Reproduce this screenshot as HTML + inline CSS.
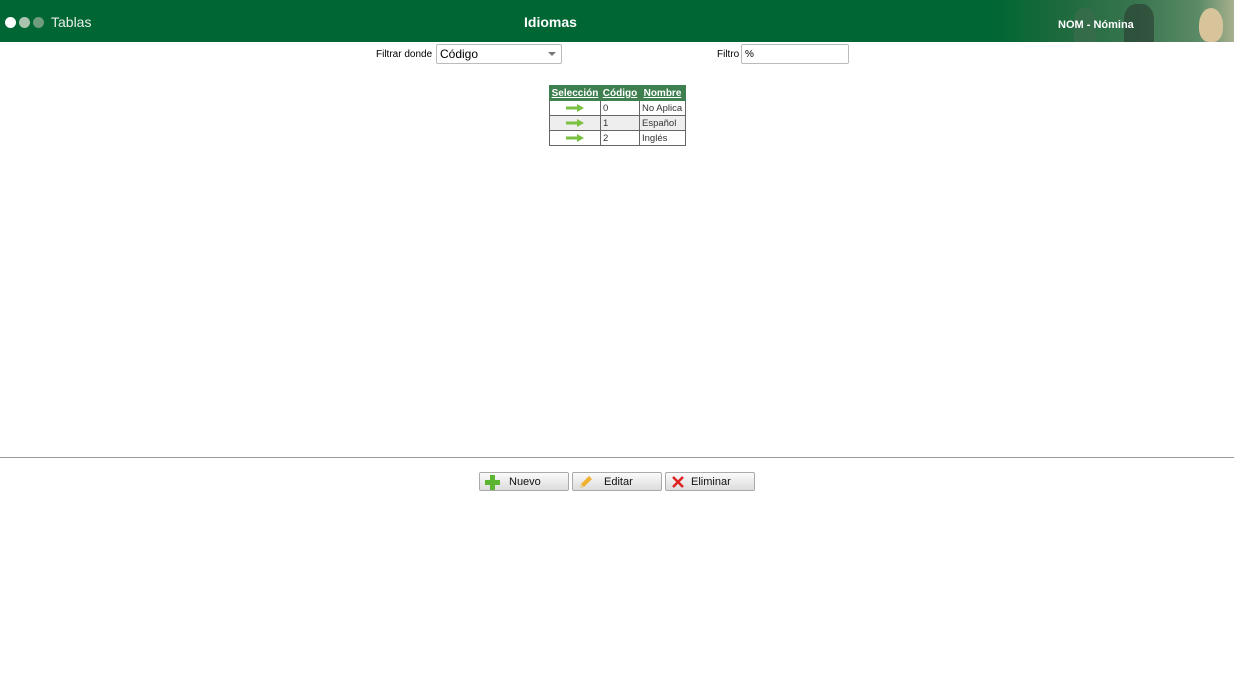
<!DOCTYPE html>
<html><head><meta charset="utf-8"><style>
*{margin:0;padding:0;box-sizing:border-box}
body{width:1234px;height:698px;background:#fff;font-family:"Liberation Sans",sans-serif;position:relative;overflow:hidden}
.hdr{position:absolute;left:0;top:0;width:1234px;height:42px;background:#006633}
.dot{position:absolute;top:17px;width:11px;height:11px;border-radius:50%}
.t{position:absolute;color:#fff}
.photo{position:absolute;right:0;top:0;width:240px;height:42px;background:linear-gradient(90deg,#006633 0%,#1f6a3e 30%,#3a7650 60%,#5b8a66 85%,#a8b08e 100%)}
.f{position:absolute;font-size:10px;color:#000}
.box{position:absolute;border:1px solid #bbb;border-radius:2px;background:#fff;font-size:12px;color:#000}
table{position:absolute;left:549px;top:85px;border-collapse:collapse;table-layout:fixed;width:136px;font-family:"Liberation Sans",sans-serif;font-size:9.5px;white-space:nowrap}
th{background:#3d7f4f;color:#fff;text-decoration:underline;font-weight:bold;height:15px;padding:0 1px;border:1px solid #3d7f4f;font-size:10px;overflow:hidden}
td{border:1px solid #666;height:15px;padding:0 2px;color:#333;overflow:hidden}
tr.alt td{background:#eee}
.arr{display:block;margin:0 auto;width:18px;height:8px}
.line{position:absolute;left:0;top:457px;width:1234px;height:1px;background:#999}
.btn{position:absolute;top:472px;width:90px;height:19px;border:1px solid #aaa;border-radius:2px;background:linear-gradient(#fbfbfb,#dcdcdc);font-family:"Liberation Sans",sans-serif;font-size:11px;color:#111}
.btn span{position:absolute;top:3px}
.btn svg{position:absolute;left:5px;top:2px}
</style></head><body>
<div class="hdr">
<div class="dot" style="left:5px;background:#fff"></div>
<div class="dot" style="left:19px;background:#aac4b0"></div>
<div class="dot" style="left:33px;background:#6e9c7c"></div>
<div class="t" style="left:51px;top:14px;font-size:14px;color:#e8f0ea">Tablas</div>
<div class="t" style="left:524px;top:14px;font-size:14px;font-weight:bold">Idiomas</div>
<div class="photo">
<div style="position:absolute;left:205px;top:8px;width:24px;height:34px;border-radius:50% 50% 40% 40%;background:#d8c49a"></div>
<div style="position:absolute;left:130px;top:4px;width:30px;height:38px;border-radius:40% 40% 0 0;background:#2a3a30;opacity:.6"></div>
<div style="position:absolute;left:80px;top:8px;width:22px;height:34px;border-radius:40% 40% 0 0;background:#3f6a4e;opacity:.6"></div>
</div>
<div class="t" style="left:1058px;top:19px;font-size:11px;font-weight:bold">NOM - Nómina</div>
</div>
<div class="f" style="left:376px;top:49px">Filtrar donde</div>
<div class="box" style="left:436px;top:44px;width:126px;height:20px;padding:2px 0 0 3px">Código<span style="position:absolute;right:5px;top:7px;border:4px solid transparent;border-top:4px solid #777;border-bottom:0"></span></div>
<div class="f" style="left:717px;top:49px">Filtro</div>
<div class="box" style="left:741px;top:44px;width:108px;height:20px;padding:4px 0 0 3px;font-size:10px">%</div>
<table>
<colgroup><col style="width:51px"><col style="width:39px"><col style="width:46px"></colgroup>
<tr><th>Selección</th><th>Código</th><th>Nombre</th></tr>
<tr><td><svg class="arr" viewBox="0 0 18 8"><path d="M0 2.5h11V0l7 4-7 4V5.5H0z" fill="#7ac142"/></svg></td><td>0</td><td>No Aplica</td></tr>
<tr class="alt"><td><svg class="arr" viewBox="0 0 18 8"><path d="M0 2.5h11V0l7 4-7 4V5.5H0z" fill="#7ac142"/></svg></td><td>1</td><td>Español</td></tr>
<tr><td><svg class="arr" viewBox="0 0 18 8"><path d="M0 2.5h11V0l7 4-7 4V5.5H0z" fill="#7ac142"/></svg></td><td>2</td><td>Inglés</td></tr>
</table>
<div class="line"></div>
<div class="btn" style="left:479px"><svg width="15" height="15" viewBox="0 0 15 15"><path d="M5 0h5v5h5v5h-5v5H5v-5H0V5h5z" fill="#5cb531"/></svg><span style="left:29px">Nuevo</span></div>
<div class="btn" style="left:572px"><svg width="15" height="15" viewBox="0 0 15 15"><path d="M2 13l1-4 8-8 3 3-8 8z" fill="#f0b030"/><path d="M2 13l1-4 3 3z" fill="#e8d0a0"/></svg><span style="left:31px">Editar</span></div>
<div class="btn" style="left:665px"><svg width="15" height="15" viewBox="0 0 15 15"><path d="M2 2l10 10M12 2L2 12" stroke="#e02020" stroke-width="2.5"/></svg><span style="left:25px">Eliminar</span></div>
</body></html>
